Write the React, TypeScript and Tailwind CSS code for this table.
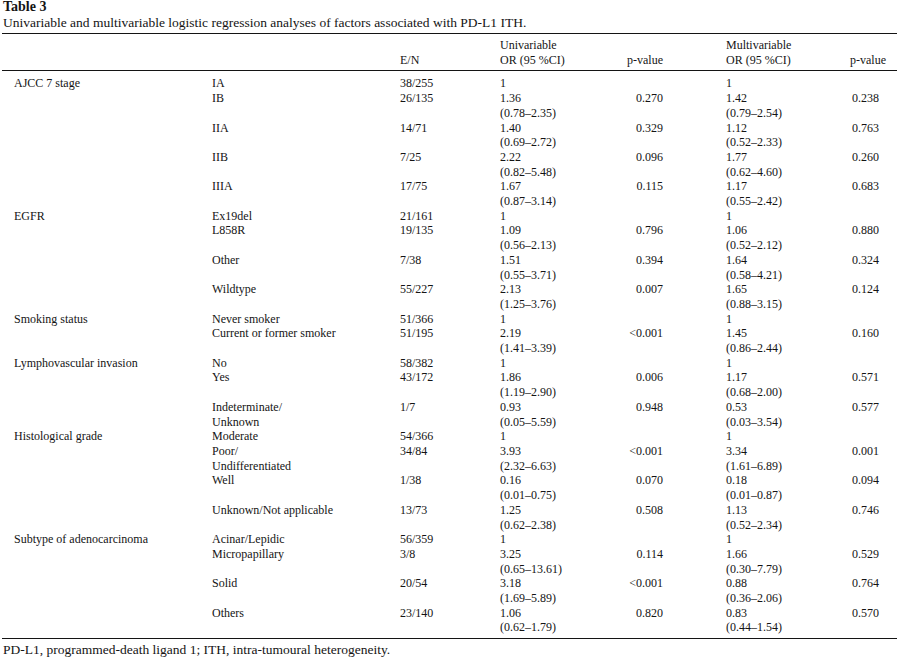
import React from "react";

type Row = {
  cat: React.ReactNode;
  en: string;
  or: string;
  ci?: string;
  p?: string;
  mor: string;
  mci?: string;
  mp?: string;
};

type Group = { label: string; rows: Row[] };

const groups: Group[] = [
  {
    label: "AJCC 7 stage",
    rows: [
      { cat: "IA", en: "38/255", or: "1", mor: "1" },
      { cat: "IB", en: "26/135", or: "1.36", ci: "(0.78–2.35)", p: "0.270", mor: "1.42", mci: "(0.79–2.54)", mp: "0.238" },
      { cat: "IIA", en: "14/71", or: "1.40", ci: "(0.69–2.72)", p: "0.329", mor: "1.12", mci: "(0.52–2.33)", mp: "0.763" },
      { cat: "IIB", en: "7/25", or: "2.22", ci: "(0.82–5.48)", p: "0.096", mor: "1.77", mci: "(0.62–4.60)", mp: "0.260" },
      { cat: "IIIA", en: "17/75", or: "1.67", ci: "(0.87–3.14)", p: "0.115", mor: "1.17", mci: "(0.55–2.42)", mp: "0.683" },
    ],
  },
  {
    label: "EGFR",
    rows: [
      { cat: "Ex19del", en: "21/161", or: "1", mor: "1" },
      { cat: "L858R", en: "19/135", or: "1.09", ci: "(0.56–2.13)", p: "0.796", mor: "1.06", mci: "(0.52–2.12)", mp: "0.880" },
      { cat: "Other", en: "7/38", or: "1.51", ci: "(0.55–3.71)", p: "0.394", mor: "1.64", mci: "(0.58–4.21)", mp: "0.324" },
      { cat: "Wildtype", en: "55/227", or: "2.13", ci: "(1.25–3.76)", p: "0.007", mor: "1.65", mci: "(0.88–3.15)", mp: "0.124" },
    ],
  },
  {
    label: "Smoking status",
    rows: [
      { cat: "Never smoker", en: "51/366", or: "1", mor: "1" },
      { cat: "Current or former smoker", en: "51/195", or: "2.19", ci: "(1.41–3.39)", p: "<0.001", mor: "1.45", mci: "(0.86–2.44)", mp: "0.160" },
    ],
  },
  {
    label: "Lymphovascular invasion",
    rows: [
      { cat: "No", en: "58/382", or: "1", mor: "1" },
      { cat: "Yes", en: "43/172", or: "1.86", ci: "(1.19–2.90)", p: "0.006", mor: "1.17", mci: "(0.68–2.00)", mp: "0.571" },
      {
        cat: (
          <>
            Indeterminate/
            <br />
            Unknown
          </>
        ),
        en: "1/7", or: "0.93", ci: "(0.05–5.59)", p: "0.948", mor: "0.53", mci: "(0.03–3.54)", mp: "0.577",
      },
    ],
  },
  {
    label: "Histological grade",
    rows: [
      { cat: "Moderate", en: "54/366", or: "1", mor: "1" },
      {
        cat: (
          <>
            Poor/
            <br />
            Undifferentiated
          </>
        ),
        en: "34/84", or: "3.93", ci: "(2.32–6.63)", p: "<0.001", mor: "3.34", mci: "(1.61–6.89)", mp: "0.001",
      },
      { cat: "Well", en: "1/38", or: "0.16", ci: "(0.01–0.75)", p: "0.070", mor: "0.18", mci: "(0.01–0.87)", mp: "0.094" },
      { cat: "Unknown/Not applicable", en: "13/73", or: "1.25", ci: "(0.62–2.38)", p: "0.508", mor: "1.13", mci: "(0.52–2.34)", mp: "0.746" },
    ],
  },
  {
    label: "Subtype of adenocarcinoma",
    rows: [
      { cat: "Acinar/Lepidic", en: "56/359", or: "1", mor: "1" },
      { cat: "Micropapillary", en: "3/8", or: "3.25", ci: "(0.65–13.61)", p: "0.114", mor: "1.66", mci: "(0.30–7.79)", mp: "0.529" },
      { cat: "Solid", en: "20/54", or: "3.18", ci: "(1.69–5.89)", p: "<0.001", mor: "0.88", mci: "(0.36–2.06)", mp: "0.764" },
      { cat: "Others", en: "23/140", or: "1.06", ci: "(0.62–1.79)", p: "0.820", mor: "0.83", mci: "(0.44–1.54)", mp: "0.570" },
    ],
  },
];

const cols = "grid grid-cols-[198px_188px_100px_125px_38px_187px_1fr]";

function DataRow({ label, row }: { label?: string; row: Row }) {
  return (
    <div className={cols}>
      <div>{label}</div>
      <div>{row.cat}</div>
      <div>{row.en}</div>
      <div>
        <div>{row.or}</div>
        {row.ci && <div>{row.ci}</div>}
      </div>
      <div className="text-right whitespace-nowrap">{row.p}</div>
      <div className="pl-[63px]">
        <div>{row.mor}</div>
        {row.mci && <div>{row.mci}</div>}
      </div>
      <div className="pl-[2px]">{row.mp}</div>
    </div>
  );
}

export default function App() {
  return (
    <div className="h-[664px] w-[903px] overflow-hidden bg-white font-['Liberation_Serif',serif] text-[#141414]">
      <div className="pl-[3px]">
        <p className="text-[14px] font-bold leading-[13px]">Table 3</p>
        <p className="text-[13.5px] leading-[20px]">
          Univariable and multivariable logistic regression analyses of factors associated with PD-L1 ITH.
        </p>
      </div>

      <div className="mx-[2px] w-[895px] border-y border-[#141414] text-[12px] leading-[14.7px]">
        <div className="pl-3 pt-[4px] pb-[3px]">
          <div className={cols + " items-end"}>
            <div />
            <div />
            <div>E/N</div>
            <div>
              <div>Univariable</div>
              <div>OR (95 %CI)</div>
            </div>
            <div className="whitespace-nowrap text-right">p-value</div>
            <div className="pl-[63px]">
              <div>Multivariable</div>
              <div>OR (95 %CI)</div>
            </div>
            <div>p-value</div>
          </div>
        </div>
      </div>

      <div className="mx-[2px] w-[895px] border-b border-[#141414] pt-[5px] pb-[3px] pl-3 text-[12px] leading-[14.7px]">
        {groups.map((g) =>
          g.rows.map((r, i) => (
            <DataRow key={g.label + i} label={i === 0 ? g.label : undefined} row={r} />
          ))
        )}
      </div>

      <p className="pl-[3px] pt-[4px] text-[13.5px] leading-[14px]">
        PD-L1, programmed-death ligand 1; ITH, intra-tumoural heterogeneity.
      </p>
    </div>
  );
}
